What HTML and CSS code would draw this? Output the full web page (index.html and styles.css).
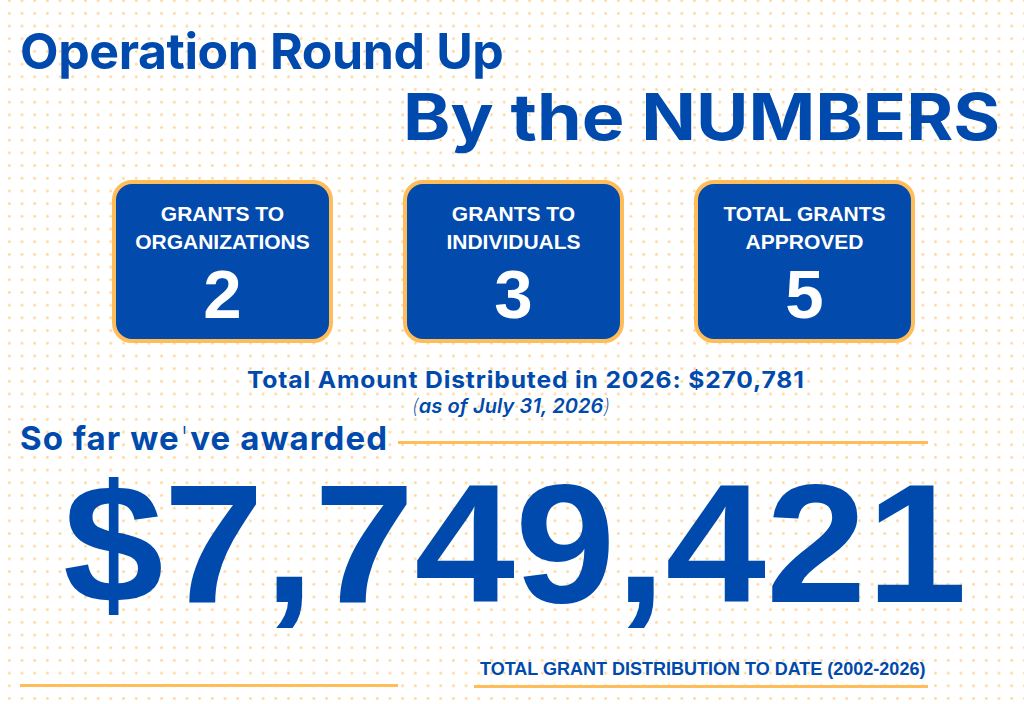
FILE: index.html
```html
<!DOCTYPE html>
<html lang="en">
<head>
<meta charset="utf-8">
<title>Operation Round Up - By the Numbers</title>
<link rel="stylesheet" href="styles.css">
</head>
<body>
<main class="page">
  <h1 class="title-main">Operation Round Up</h1>
  <h2 class="title-sub">By the NUMBERS</h2>

  <section class="cards">
    <div class="card">
      <p class="card-label">GRANTS TO<br>ORGANIZATIONS</p>
      <p class="card-value">2</p>
    </div>
    <div class="card">
      <p class="card-label">GRANTS TO<br>INDIVIDUALS</p>
      <p class="card-value">3</p>
    </div>
    <div class="card">
      <p class="card-label">TOTAL GRANTS<br>APPROVED</p>
      <p class="card-value">5</p>
    </div>
  </section>

  <p class="dist-total">Total Amount Distributed in 2026: $270,781</p>
  <p class="dist-date"><span class="paren">(</span>as of July 31, 2026<span class="paren">)</span></p>

  <div class="awarded-row">
    <p class="awarded">So far we<span class="apos">'</span>ve awarded</p>
    <div class="rule rule-awarded"></div>
  </div>

  <p class="big-number">$7,749,421</p>

  <div class="bottom-row">
    <div class="rule rule-left"></div>
    <div class="caption-block">
      <p class="caption">TOTAL GRANT DISTRIBUTION TO DATE (2002-2026)</p>
      <div class="rule rule-caption"></div>
    </div>
  </div>
</main>
</body>
</html>
```

FILE: styles.css
```css
html, body {
  margin: 0;
  padding: 0;
}

body {
  width: 1024px;
  height: 704px;
  overflow: hidden;
  background-color: #ffffff;
  background-image: radial-gradient(circle, #fdd597 0, #fedca8 1.1px, rgba(255,255,255,0) 1.7px);
  background-size: 12.7px 12.7px;
  background-position: 3px 7px;
  color: #004aad;
  font-family: "Inter", "Liberation Sans", sans-serif;
}

.page {
  display: flex;
  flex-direction: column;
  align-items: flex-start;
}

p, h1, h2 {
  margin: 0;
}

.title-main {
  margin: 26px 0 0 20px;
  font-size: 50px;
  line-height: 50px;
  font-weight: 700;
  letter-spacing: -0.4px;
}

.title-sub {
  margin: 9px 24px 0 0;
  align-self: flex-end;
  font-size: 64px;
  line-height: 64px;
  font-weight: 700;
  letter-spacing: 0;
  transform: scaleX(1.12);
  transform-origin: right center;
}

.cards {
  display: flex;
  gap: 70px;
  margin: 31px 0 0 112px;
}

.card {
  box-sizing: border-box;
  width: 221px;
  height: 163px;
  border: 4px solid #ffbd59;
  border-radius: 20px;
  background: #034aad;
  color: #ffffff;
  text-align: center;
  font-family: "Liberation Sans", Arial, sans-serif;
  font-weight: 700;
  padding-top: 16px;
}

.card-label {
  font-size: 21px;
  line-height: 28px;
}

.card-value {
  margin-top: 4px;
  font-size: 69px;
  line-height: 69px;
}

.dist-total {
  margin: 24px 0 0 247px;
  font-size: 23px;
  line-height: 26px;
  font-weight: 700;
  letter-spacing: 0.8px;
  transform: scaleX(1.07);
  transform-origin: left center;
  white-space: nowrap;
}

.dist-date {
  margin: 1px 0 0 412px;
  font-size: 20px;
  line-height: 24px;
  font-weight: 600;
  font-style: italic;
  letter-spacing: 0.1px;
}

.paren {
  font-weight: 200;
}

.awarded-row {
  display: flex;
  align-items: flex-start;
  margin: 2px 0 0 20px;
}

.awarded {
  font-size: 33px;
  line-height: 36px;
  font-weight: 700;
  letter-spacing: 1.1px;
  white-space: nowrap;
}

.apos {
  font-weight: 200;
}

.rule {
  background: #ffbd59;
  height: 3px;
}

.rule-awarded {
  width: 530px;
  margin: 21px 0 0 10px;
}

.big-number {
  margin: 8px 0 0 63px;
  font-family: "Liberation Sans", Arial, sans-serif;
  font-weight: 700;
  font-size: 168px;
  line-height: 160px;
  transform: scaleX(1.075);
  transform-origin: left center;
  white-space: nowrap;
}

.bottom-row {
  display: flex;
  align-items: flex-end;
  margin: 35px 0 0 20px;
}

.rule-left {
  width: 378px;
  margin-bottom: 1px;
}

.caption-block {
  width: 454px;
  margin-left: 76px;
}

.caption {
  padding-left: 6px;
  font-family: "Liberation Sans", Arial, sans-serif;
  font-weight: 700;
  font-size: 18px;
  line-height: 20px;
}

.rule-caption {
  margin-top: 6px;
}
```
